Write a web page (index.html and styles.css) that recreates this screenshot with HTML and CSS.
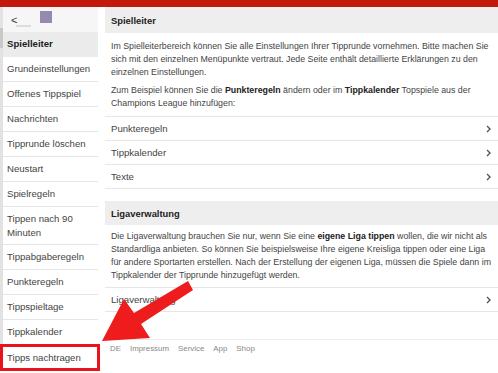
FILE: index.html
```html
<!DOCTYPE html>
<html lang="de">
<head>
<meta charset="utf-8">
<link rel="stylesheet" href="styles.css">
</head>
<body>
<div class="topbar"></div>
<div class="layout">
  <aside class="sidebar">
    <div class="side-top">
      <span class="back">&lt;</span>
      <span class="back-bar"></span>
      <span class="avatar"></span>
    </div>
    <div class="side-item active">Spielleiter</div>
    <div class="side-item">Grundeinstellungen</div>
    <div class="side-item">Offenes Tippspiel</div>
    <div class="side-item">Nachrichten</div>
    <div class="side-item">Tipprunde löschen</div>
    <div class="side-item">Neustart</div>
    <div class="side-item">Spielregeln</div>
    <div class="side-item two">Tippen nach 90 Minuten</div>
    <div class="side-item">Tippabgaberegeln</div>
    <div class="side-item">Punkteregeln</div>
    <div class="side-item">Tippspieltage</div>
    <div class="side-item">Tippkalender</div>
    <div class="side-item marked">Tipps nachtragen</div>
  </aside>
  <main class="main">
    <section class="card">
      <h2 class="card-head first">Spielleiter</h2>
      <div class="card-body">
        <p>Im Spielleiterbereich können Sie alle Einstellungen Ihrer Tipprunde vornehmen. Bitte machen Sie sich mit den einzelnen Menüpunkte vertraut. Jede Seite enthält detaillierte Erklärungen zu den einzelnen Einstellungen.</p>
        <p>Zum Beispiel können Sie die <b>Punkteregeln</b> ändern oder im <b>Tippkalender</b> Topspiele aus der Champions League hinzufügen:</p>
      </div>
      <ul class="links">
        <li><span>Punkteregeln</span><svg class="chev" width="5" height="8" viewBox="0 0 5 8"><path d="M1 1l3 3-3 3" fill="none" stroke="#555" stroke-width="1.4"/></svg></li>
        <li><span>Tippkalender</span><svg class="chev" width="5" height="8" viewBox="0 0 5 8"><path d="M1 1l3 3-3 3" fill="none" stroke="#555" stroke-width="1.4"/></svg></li>
        <li><span>Texte</span><svg class="chev" width="5" height="8" viewBox="0 0 5 8"><path d="M1 1l3 3-3 3" fill="none" stroke="#555" stroke-width="1.4"/></svg></li>
      </ul>
    </section>
    <section class="card">
      <h2 class="card-head second">Ligaverwaltung</h2>
      <div class="card-body tight">
        <p>Die Ligaverwaltung brauchen Sie nur, wenn Sie eine <b>eigene Liga tippen</b> wollen, die wir nicht als Standardliga anbieten. So können Sie beispielsweise Ihre eigene Kreisliga tippen oder eine Liga für andere Sportarten erstellen. Nach der Erstellung der eigenen Liga, müssen die Spiele dann im Tippkalender der Tipprunde hinzugefügt werden.</p>
      </div>
      <ul class="links last">
        <li><span>Ligaverwaltung</span><svg class="chev" width="5" height="8" viewBox="0 0 5 8"><path d="M1 1l3 3-3 3" fill="none" stroke="#555" stroke-width="1.4"/></svg></li>
      </ul>
    </section>
    <footer class="footer">
      <a>DE</a><a>Impressum</a><a>Service</a><a>App</a><a>Shop</a>
    </footer>
  </main>
</div>
<svg class="arrow" width="498" height="373" viewBox="0 0 498 373">
  <polygon points="102,341 124,299 134,313 188,281 193,290 141,324 150,338" fill="#ee1c1c"/>
</svg>
</body>
</html>
```
FILE: styles.css
```css
html, body {
  margin: 0;
  padding: 0;
  background: #fff;
}
body {
  font-family: "Liberation Sans", Arial, sans-serif;
  font-size: 9.6px;
  color: #444;
  width: 498px;
  height: 373px;
  overflow: hidden;
  position: relative;
}
.topbar {
  height: 7px;
  background: #c3180c;
}
.layout {
  display: flex;
  gap: 7px;
}
.sidebar {
  width: 95px;
  flex: none;
  border-left: 3px solid #e2e2e2;
  display: flex;
  flex-direction: column;
}
.side-top {
  height: 25px;
  background: #f6f6f6;
  position: relative;
  display: flex;
  align-items: center;
  padding-left: 8px;
}
.back {
  font-size: 11px;
  color: #333;
  margin-top: 1px;
}
.back-bar {
  position: absolute;
  left: 13px;
  top: 18px;
  width: 15px;
  height: 2px;
  background: #dcdcdc;
}
.avatar {
  position: absolute;
  left: 37px;
  top: 4px;
  width: 12px;
  height: 12px;
  background: #9689b0;
}
.side-item {
  height: 24px;
  border-bottom: 1px solid #e6e6e6;
  display: flex;
  align-items: center;
  padding-left: 4px;
  color: #444;
  line-height: 14px;
}
.side-item.active {
  background: #ebebeb;
  font-weight: bold;
  color: #222;
  border-bottom-color: #ebebeb;
  position: relative;
}
.side-item.active::before {
  content: "";
  position: absolute;
  left: -3px;
  top: -4px;
  width: 3px;
  height: 20px;
  background: #c8c8c8;
}
.side-item.two {
  height: 37px;
  padding-right: 10px;
}
.side-item.marked {
  border: 3px solid #e8141a;
  margin-left: -3px;
  margin-top: -1px;
  height: 21px;
  padding-left: 4px;
  width: 90px;
}
.main {
  flex: 1;
  display: flex;
  flex-direction: column;
}
.card-head {
  margin: 0;
  background: #eeeeee;
  font-size: 9.4px;
  font-weight: bold;
  color: #222;
  padding-left: 6px;
  display: flex;
  align-items: center;
}
.card-head.first { height: 26px; }
.card-head.second { height: 24px; }
.card-body {
  padding: 7px 6px 6px 6px;
  font-size: 8.8px;
}
.card-body.tight {
  padding-top: 5px;
  padding-bottom: 5px;
}
.card-body p {
  margin: 0 0 5px 0;
  line-height: 13px;
}
.card-body p:last-child { margin-bottom: 0; }
.card-body b { color: #222; }
.links {
  list-style: none;
  margin: 0 0 12px 0;
  padding: 0;
  border-top: 1px solid #e6e6e6;
}
.links li {
  height: 23px;
  border-bottom: 1px solid #e6e6e6;
  display: flex;
  align-items: center;
  justify-content: space-between;
  padding: 0 7px 0 6px;
}
.links.last { margin-bottom: 27px; }
.chev { display: block; }
.footer {
  border-top: 1px solid #ededed;
  display: flex;
  gap: 9px;
  padding: 4px 0 0 5px;
  font-size: 7.9px;
  color: #888;
}
.arrow {
  position: absolute;
  left: 0;
  top: 0;
  pointer-events: none;
}
```
